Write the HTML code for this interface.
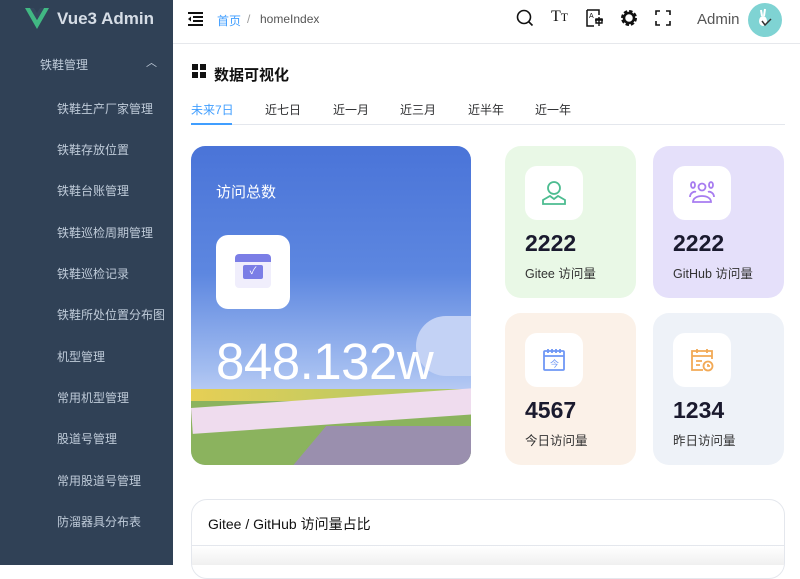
<!DOCTYPE html>
<html><head><meta charset="utf-8"><style>
*{margin:0;padding:0;box-sizing:border-box}
body{width:800px;height:565px;overflow:hidden;font-family:"Liberation Sans","Noto Sans CJK SC",sans-serif;background:#fff;position:relative}
.side{position:absolute;left:0;top:0;width:173px;height:565px;background:#304156}
.logo{position:absolute;left:25px;top:8px;color:#d6dde6;font-size:17px;font-weight:bold;display:flex;align-items:center}
.side .it{position:absolute;color:#bfcbd9;font-size:12px}
.hdr{position:absolute;left:173px;top:0;right:0;height:44px;border-bottom:1px solid #e6e8ec}
.abs{position:absolute}
.tab{position:absolute;top:101px;font-size:12px;color:#303133}
.card{position:absolute;border-radius:16px;width:131px;height:152px}
.ib{position:absolute;left:20px;top:20px;width:58px;height:54px;background:#fff;border-radius:12px;display:flex;align-items:center;justify-content:center}
.num{position:absolute;left:20px;top:84px;font-size:23px;font-weight:bold;color:#1a1a2e}
.lab{position:absolute;left:20px;top:117px;font-size:12.5px;color:#333}
</style></head><body>
<div class="side">
 <div class="logo"><svg width="24" height="22" viewBox="0 0 24 22"><path d="M0 0h5l7 12 7-12h5L12 21z" fill="#41b883"/><path d="M5 0h4l3 5 3-5h4l-7 12z" fill="#35495e"/></svg><span style="margin-left:8px">Vue3 Admin</span></div>
 <div class="it" style="left:40px;top:56px">铁鞋管理</div>
 <div class="it" style="left:146px;top:54px;font-size:11px">︿</div>
 <div class="it" style="left:57px;top:100px">铁鞋生产厂家管理</div>
 <div class="it" style="left:57px;top:141px">铁鞋存放位置</div>
 <div class="it" style="left:57px;top:182px">铁鞋台账管理</div>
 <div class="it" style="left:57px;top:224px">铁鞋巡检周期管理</div>
 <div class="it" style="left:57px;top:265px">铁鞋巡检记录</div>
 <div class="it" style="left:57px;top:306px">铁鞋所处位置分布图</div>
 <div class="it" style="left:57px;top:348px">机型管理</div>
 <div class="it" style="left:57px;top:389px">常用机型管理</div>
 <div class="it" style="left:57px;top:430px">股道号管理</div>
 <div class="it" style="left:57px;top:472px">常用股道号管理</div>
 <div class="it" style="left:57px;top:513px">防溜器具分布表</div>
</div>
<div class="hdr">
 <svg class="abs" style="left:15px;top:12px" width="15" height="14" viewBox="0 0 15 14"><path d="M0 1h15M5 5h10M5 9h10M0 13h15" stroke="#111" stroke-width="2"/><path d="M0 7l3-2.5v5z" fill="#111"/></svg>
 <div class="abs" style="left:44px;top:12px;font-size:12px;color:#409eff">首页</div>
 <div class="abs" style="left:74px;top:12px;font-size:12px;color:#999">/</div>
 <div class="abs" style="left:87px;top:12px;font-size:12px;color:#555">homeIndex</div>
 <svg class="abs" style="left:343px;top:9px" width="18" height="18" viewBox="0 0 18 18"><circle cx="8" cy="8" r="6.5" fill="none" stroke="#111" stroke-width="1.6"/><path d="M12.5 12.5l4 4" stroke="#111" stroke-width="1.6"/></svg>
 <div class="abs" style="left:378px;top:8px;font-family:'Liberation Serif',serif;font-size:16px;color:#111">T<span style="font-size:12px">T</span></div>
 <svg class="abs" style="left:413px;top:9px" width="18" height="18" viewBox="0 0 18 18"><path d="M1 1h12v5M1 1v16h7" fill="none" stroke="#111" stroke-width="1.5"/><text x="3" y="9" font-size="7" fill="#111">A</text><path d="M9 11h8M13 8v9M10 10h6v4h-6z" fill="none" stroke="#111" stroke-width="1.4"/></svg>
 <svg class="abs" style="left:447px;top:9px" width="18" height="18" viewBox="0 0 18 18"><circle cx="9" cy="9" r="6" fill="none" stroke="#111" stroke-width="4" stroke-dasharray="3 1.7"/><circle cx="9" cy="9" r="5" fill="none" stroke="#111" stroke-width="2.5"/></svg>
 <svg class="abs" style="left:482px;top:10px" width="16" height="16" viewBox="0 0 16 16"><path d="M1 5V1h4M11 1h4v4M15 11v4h-4M5 15H1v-4" fill="none" stroke="#111" stroke-width="1.6"/></svg>
 <div class="abs" style="left:524px;top:11px;font-size:15px;color:#555">Admin</div>
 <div class="abs" style="left:575px;top:3px;width:34px;height:34px;border-radius:50%;background:#7fd3d3"></div>
 <svg class="abs" style="left:582px;top:8px" width="20" height="22" viewBox="0 0 20 22"><path d="M6 2l1 6M10 1l-1 7" stroke="#fff" stroke-width="2"/><ellipse cx="8" cy="13" rx="4" ry="5" fill="#fff"/><path d="M7 13l3 4 6-6" stroke="#333" stroke-width="1.5" fill="none"/></svg>
</div>
<div class="abs" style="left:192px;top:64px;width:14px;height:14px;display:grid;grid-template-columns:6px 6px;gap:2px"><i style="background:#111"></i><i style="background:#111"></i><i style="background:#111"></i><i style="background:#111"></i></div>
<div class="abs" style="left:214px;top:64px;font-size:15px;font-weight:bold;color:#111">数据可视化</div>
<div class="tab" style="left:191px;color:#409eff">未来7日</div>
<div class="tab" style="left:265px">近七日</div>
<div class="tab" style="left:333px">近一月</div>
<div class="tab" style="left:400px">近三月</div>
<div class="tab" style="left:468px">近半年</div>
<div class="tab" style="left:535px">近一年</div>
<div class="abs" style="left:191px;top:124px;width:594px;height:1px;background:#e4e7ed"></div>
<div class="abs" style="left:191px;top:123px;width:41px;height:2px;background:#409eff"></div>
<div class="abs" style="left:191px;top:146px;width:280px;height:319px;border-radius:14px;overflow:hidden;background:linear-gradient(180deg,#4a74d8 0%,#5d87e0 40%,#a3bdf0 70%,#c0d0f5 80%)">
 <div class="abs" style="left:225px;top:170px;width:90px;height:60px;border-radius:40px;background:#c3d2f5"></div>
 <div class="abs" style="left:0;top:243px;width:280px;height:14px;background:linear-gradient(90deg,#e6cf55,#a8c76a)"></div>
 <div class="abs" style="left:0;top:255px;width:280px;height:70px;background:#8bb35e"></div>
 <div class="abs" style="left:0;top:262px;width:300px;height:26px;background:#efdcee;transform:rotate(-4deg);transform-origin:left top"></div>
 <div class="abs" style="left:110px;top:280px;width:200px;height:60px;background:#9a8fae;transform:skewX(-40deg)"></div>
 <div class="abs" style="left:25px;top:35px;font-size:15px;color:#fff">访问总数</div>
 <div class="abs" style="left:25px;top:89px;width:74px;height:74px;background:#fff;border-radius:12px"></div>
 <div class="abs" style="left:44px;top:108px;width:36px;height:34px;border-radius:4px;background:#f0eefc;border-top:8px solid #7b7ee6"></div>
 <div class="abs" style="left:52px;top:119px;width:20px;height:14px;border-radius:2px;background:#7b7ee6;color:#fff;font-size:10px;text-align:center;line-height:14px">✓</div>
 <div class="abs" style="left:25px;top:186px;font-size:51px;color:#fff;font-weight:300;letter-spacing:-0.5px">848.132w</div>
</div>
<div class="card" style="left:505px;top:146px;background:#e9f8e6"><div class="ib"><svg width="28" height="28" viewBox="0 0 28 28" fill="none" stroke="#4cbc90" stroke-width="1.8"><circle cx="14" cy="9" r="6"/><path d="M3 25v-4l7-4 4 3 4-3 7 4v4z"/></svg></div><div class="num">2222</div><div class="lab">Gitee 访问量</div></div>
<div class="card" style="left:653px;top:146px;background:#e5e0fa"><div class="ib"><svg width="28" height="28" viewBox="0 0 28 28" fill="none" stroke="#a77cf0" stroke-width="1.8"><circle cx="14" cy="8" r="3.5"/><ellipse cx="5" cy="6" rx="2" ry="3"/><ellipse cx="23" cy="6" rx="2" ry="3"/><path d="M5 23c0-8 18-8 18 0zM2 18c0-4 4-6 6-5M26 18c0-4-4-6-6-5"/></svg></div><div class="num">2222</div><div class="lab">GitHub 访问量</div></div>
<div class="card" style="left:505px;top:313px;background:#fbf1e8"><div class="ib"><svg width="26" height="26" viewBox="0 0 26 26" fill="none" stroke="#6f97f5" stroke-width="1.8"><rect x="3" y="4" width="20" height="19" rx="1"/><path d="M3 9h20M7 2v4M11 2v4M15 2v4M19 2v4"/><text x="9" y="20" font-size="9" fill="#6f97f5" stroke="none">今</text></svg></div><div class="num">4567</div><div class="lab">今日访问量</div></div>
<div class="card" style="left:653px;top:313px;background:#eef2f8"><div class="ib"><svg width="26" height="26" viewBox="0 0 26 26" fill="none" stroke="#f2a955" stroke-width="1.8"><path d="M14 23H3V4h20v8M3 9h20M8 2v4M18 2v4M7 14h6M7 18h4"/><circle cx="19" cy="19" r="4.5"/><path d="M19 17v2h2"/></svg></div><div class="num">1234</div><div class="lab">昨日访问量</div></div>
<div class="abs" style="left:191px;top:499px;width:594px;height:80px;border:1px solid #e4e7ed;border-radius:16px"></div>
<div class="abs" style="left:192px;top:545px;width:592px;height:20px;border-top:1px solid #e4e7ed;background:linear-gradient(#fff,#f0f0f0)"></div>
<div class="abs" style="left:208px;top:514px;font-size:14px;color:#111">Gitee / GitHub 访问量占比</div>
</body></html>
